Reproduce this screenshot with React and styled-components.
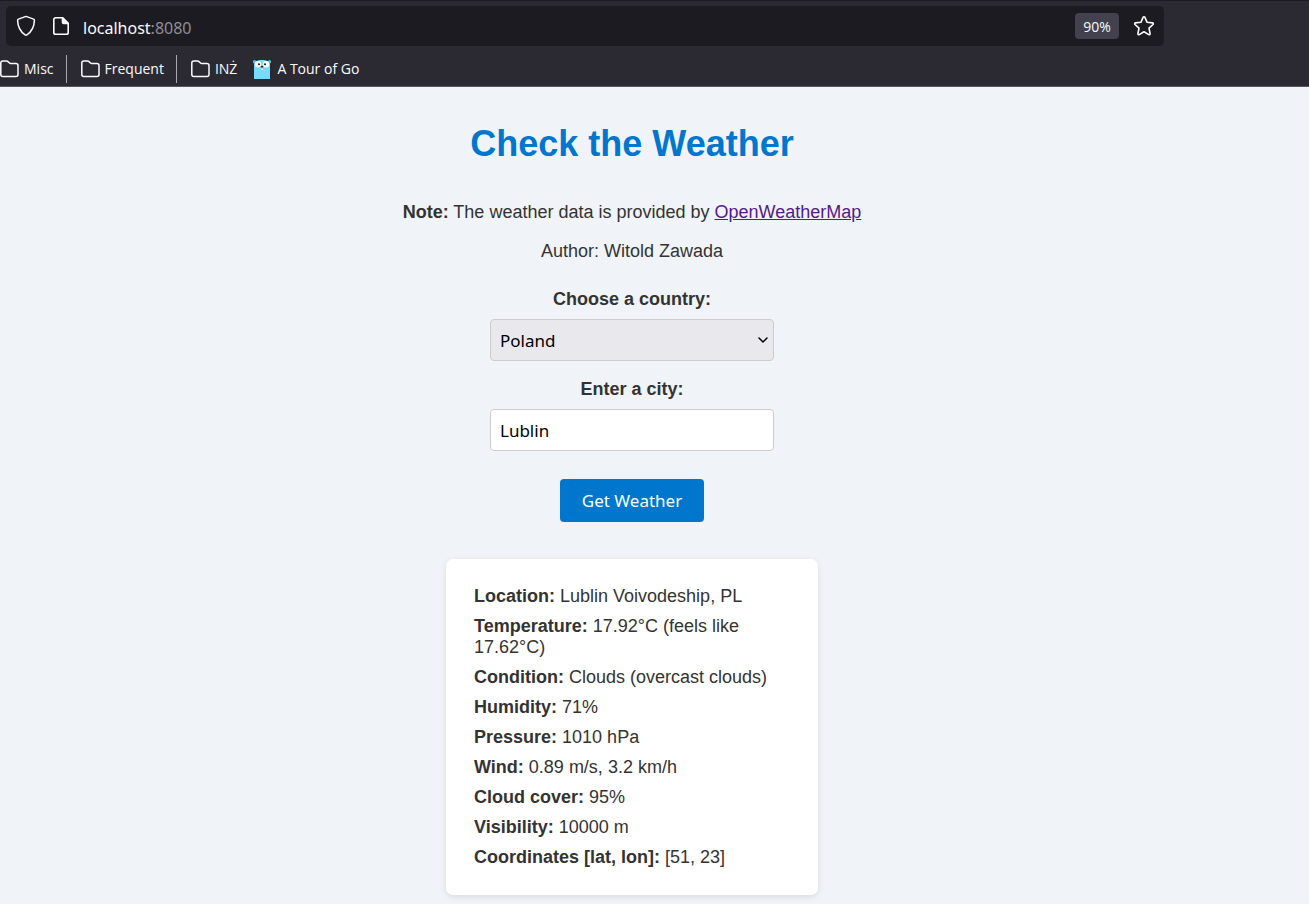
import React, { useState } from "react";
import styled, { createGlobalStyle } from "styled-components";

const GlobalStyle = createGlobalStyle`
  *, *::before, *::after { box-sizing: border-box; }
  body {
    margin: 0;
    background: #f0f4f8;
    color: #333;
    font-family: "Liberation Sans", Arial, sans-serif;
    font-size: 18px;
    line-height: 21px;
  }
`;

const uiFont = `"Noto Sans", "Segoe UI", sans-serif`;

const Chrome = styled.header`
  display: flex;
  flex-direction: column;
  gap: 6px;
  height: 87px;
  padding-top: 5px;
  background: #2b2a33;
  border-top: 1px solid #1c1b22;
  border-bottom: 1px solid #56555e;
  color: #fbfbfe;
  font-family: "Open Sans", "Segoe UI", sans-serif;
`;

const AddressBar = styled.div`
  display: flex;
  align-items: center;
  height: 40px;
  margin-left: 6px;
  margin-right: 145px;
  padding: 0 8px;
  border-radius: 5px;
  background: #1c1b22;
`;

const IconButton = styled.button`
  display: flex;
  align-items: center;
  justify-content: center;
  width: 24px;
  height: 24px;
  padding: 0;
  border: 0;
  background: none;
  color: inherit;
`;

const SiteButtons = styled.div`
  display: flex;
  gap: 11px;
`;

const Address = styled.div`
  flex: 1;
  padding: 3px 0 0 10px;
  font-family: ${uiFont};
  font-size: 16px;
  line-height: 24px;
`;

const Port = styled.span`
  color: #8f8e96;
`;

const ZoomButton = styled.button`
  width: 44px;
  height: 26px;
  margin-right: 13px;
  padding: 0;
  border: 0;
  border-radius: 4px;
  background: #42414d;
  color: inherit;
  font-family: "Open Sans", sans-serif;
  font-size: 14px;
`;

const Bookmarks = styled.nav`
  display: flex;
  align-items: center;
  height: 34px;
`;

const Bookmark = styled.a`
  display: flex;
  align-items: center;
  gap: 5px;
  padding-right: ${(p) => p.$end || 0}px;
  color: inherit;
  font-size: 14px;
  line-height: 20px;
  text-decoration: none;
  white-space: nowrap;
`;

const Divider = styled.span`
  width: 1px;
  height: 28px;
  margin-right: 14px;
  background: #a9a8ad;
`;

const Page = styled.main`
  display: flex;
  flex-direction: column;
  align-items: center;
  padding: 36px 45px 9px 0;
`;

const Title = styled.h1`
  margin: 0 0 37px;
  color: #0077cc;
  font-size: 36px;
  line-height: 42px;
`;

const Paragraph = styled.p`
  margin: 0 0 18px;
`;

const SourceLink = styled.a`
  color: #551a8b;
`;

const Form = styled.form`
  display: flex;
  flex-direction: column;
  align-items: center;
  width: 284px;
  padding-top: 9px;
`;

const Label = styled.label`
  margin-bottom: 9px;
  font-weight: bold;
`;

const SelectBox = styled.div`
  display: grid;
  width: 100%;
  margin-bottom: 18px;
  align-items: center;

  & > * { grid-area: 1 / 1; }
  & > svg { justify-self: end; margin-right: 5px; pointer-events: none; }
`;

const Select = styled.select`
  appearance: none;
  width: 100%;
  height: 42px;
  padding: 0 9px;
  border: 1px solid #ccc;
  border-radius: 4px;
  background: #e9e9ed;
  color: #000;
  font-family: ${uiFont};
  font-size: 17px;
`;

const TextInput = styled.input`
  width: 100%;
  height: 42px;
  margin-bottom: 28px;
  padding: 0 9px;
  border: 1px solid #ccc;
  border-radius: 4px;
  background: #fff;
  color: #000;
  font-family: ${uiFont};
  font-size: 17px;
`;

const Submit = styled.button`
  width: 144px;
  height: 43px;
  padding: 0;
  border: 0;
  border-radius: 4px;
  background: #0077cc;
  color: #fff;
  font-family: ${uiFont};
  font-size: 17px;
`;

const Card = styled.section`
  display: flex;
  flex-direction: column;
  gap: 9px;
  width: 372px;
  margin-top: 37px;
  padding: 27px 28px;
  border-radius: 7px;
  background: #fff;
  box-shadow: 0 2px 6px rgba(0, 0, 0, 0.1);
`;

const Reading = styled.p`
  margin: 0;
`;

const ShieldIcon = () => (
  <svg width="20" height="22" viewBox="0 0 20 22" fill="none" stroke="currentColor" strokeWidth="1.5" strokeLinejoin="round" aria-hidden="true">
    <path d="M10 1.4 17.6 4.1c.6.2.9.7.8 1.3-.2 5.7-2.300 11-7.500 14.500a1.600 1.600 0 0 1-1.800 0C3.900 16.400 1.800 11.100 1.600 5.400c0-.6.3-1.100.8-1.300Z" />
  </svg>
);

const PageIcon = () => (
  <svg width="16" height="18" viewBox="0 0 16 18" fill="none" stroke="currentColor" strokeWidth="1.6" strokeLinejoin="round" aria-hidden="true">
    <path d="M9.7.8H2.6A1.8 1.8 0 0 0 .8 2.6v12.8c0 1 .8 1.8 1.8 1.8h10.8c1 0 1.8-.8 1.8-1.8V6.200Z" />
    <path d="M9.500 1v4.200c0 .7.500 1.200 1.200 1.200H15Z" fill="currentColor" />
  </svg>
);

const StarIcon = () => (
  <svg width="22" height="22" viewBox="0 0 22 22" fill="none" stroke="currentColor" strokeWidth="1.6" strokeLinejoin="round" aria-hidden="true">
    <path d="M10.200 2.200a.9.9 0 0 1 1.600 0l2.300 5.100 5.400.6c.8.1 1.100 1 .5 1.600l-4 3.700 1.100 5.500c.1.800-.6 1.300-1.300.9L11 16.800l-4.800 2.800c-.7.4-1.400-.1-1.300-.9L6 13.200 2 9.500c-.6-.6-.3-1.500.5-1.600l5.400-.6Z" />
  </svg>
);

const FolderIcon = () => (
  <svg width="19" height="18" viewBox="0 0 19 18" fill="none" stroke="currentColor" strokeWidth="1.5" strokeLinejoin="round" aria-hidden="true">
    <path d="M.8 14.500V3c0-1.200.9-2 2-2h3.700c.6 0 1.100.2 1.500.6L9.500 3c.3.300.7.500 1.200.5h5.200c1.200 0 2.100.9 2.100 2v9c0 1.100-.9 2-2.100 2H2.800c-1.100 0-2-.9-2-2Z" />
  </svg>
);

const GopherIcon = () => (
  <svg width="20" height="20" viewBox="0 0 20 20" aria-hidden="true">
    <circle cx="2.5" cy="2.8" r="1.7" fill="#5fb7c7" />
    <circle cx="17.5" cy="2.8" r="1.7" fill="#5fb7c7" />
    <path d="M2 20V6c0-3.500 3-5 8-5s8 1.500 8 5v14Z" fill="#74dcff" />
    <circle cx="6" cy="5.2" r="3.2" fill="#fff" />
    <circle cx="14" cy="5.2" r="3.2" fill="#fff" />
    <circle cx="7" cy="5.2" r="1" fill="#111" />
    <circle cx="13" cy="5.2" r="1" fill="#111" />
    <ellipse cx="10" cy="8.7" rx="2" ry="1.3" fill="#c9b091" />
    <ellipse cx="10" cy="7.6" rx="1.3" ry=".9" fill="#222" />
    <path d="M9.200 9.500h1.600v1.600H9.200Z" fill="#fff" />
  </svg>
);

const ChevronIcon = () => (
  <svg width="12" height="8" viewBox="0 0 12 8" fill="none" stroke="#000" strokeWidth="1.5" strokeLinecap="round" strokeLinejoin="round" aria-hidden="true">
    <path d="m2 2 4 4 4-4" />
  </svg>
);

const readings = [
  ["Location", "Lublin Voivodeship, PL"],
  ["Temperature", "17.92°C (feels like 17.62°C)"],
  ["Condition", "Clouds (overcast clouds)"],
  ["Humidity", "71%"],
  ["Pressure", "1010 hPa"],
  ["Wind", "0.89 m/s, 3.2 km/h"],
  ["Cloud cover", "95%"],
  ["Visibility", "10000 m"],
  ["Coordinates [lat, lon]", "[51, 23]"],
];

export default function App() {
  const [city, setCity] = useState("Lublin");

  return (
    <>
      <GlobalStyle />
      <Chrome>
        <AddressBar>
          <SiteButtons>
            <IconButton aria-label="Tracking protection"><ShieldIcon /></IconButton>
            <IconButton aria-label="Site information"><PageIcon /></IconButton>
          </SiteButtons>
          <Address>localhost<Port>:8080</Port></Address>
          <ZoomButton>90%</ZoomButton>
          <IconButton aria-label="Bookmark this page"><StarIcon /></IconButton>
        </AddressBar>
        <Bookmarks>
          <Bookmark href="#misc" $end={12}><FolderIcon />Misc</Bookmark>
          <Divider />
          <Bookmark href="#frequent" $end={12}><FolderIcon />Frequent</Bookmark>
          <Divider />
          <Bookmark href="#inz" $end={15}><FolderIcon />INŻ</Bookmark>
          <Bookmark href="#tour"><GopherIcon />A Tour of Go</Bookmark>
        </Bookmarks>
      </Chrome>
      <Page>
        <Title>Check the Weather</Title>
        <Paragraph>
          <strong>Note:</strong> The weather data is provided by{" "}
          <SourceLink href="#openweathermap">OpenWeatherMap</SourceLink>
        </Paragraph>
        <Paragraph>Author: Witold Zawada</Paragraph>
        <Form onSubmit={(e) => e.preventDefault()}>
          <Label htmlFor="country">Choose a country:</Label>
          <SelectBox>
            <Select id="country" defaultValue="PL">
              <option value="PL">Poland</option>
            </Select>
            <ChevronIcon />
          </SelectBox>
          <Label htmlFor="city">Enter a city:</Label>
          <TextInput id="city" type="text" value={city} onChange={(e) => setCity(e.target.value)} />
          <Submit type="submit">Get Weather</Submit>
        </Form>
        <Card>
          {readings.map(([name, value]) => (
            <Reading key={name}><strong>{name}:</strong> {value}</Reading>
          ))}
        </Card>
      </Page>
    </>
  );
}
